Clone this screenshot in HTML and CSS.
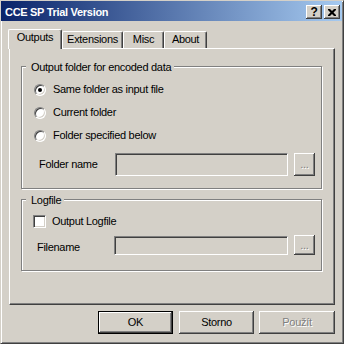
FILE: index.html
```html
<!DOCTYPE html>
<html lang="cs">
<head>
  <meta charset="UTF-8">
  <title>CCE SP Trial Version</title>
  <link rel="stylesheet" href="styles.css">
</head>
<body>
  <div class="window">
    <div class="titlebar">
      <span class="title">CCE SP Trial Version</span>
      <div class="caption-buttons">
        <span class="cap-btn">?</span>
        <span class="cap-btn">
          <svg width="8" height="7" viewBox="0 0 8 7">
            <path d="M0 0h2l2 2 2-2h2v1l-2.5 2.5 2.5 2.5v1h-2l-2-2-2 2h-2v-1l2.5-2.5-2.5-2.5z" fill="#000"/>
          </svg>
        </span>
      </div>
    </div>

    <div class="content">
      <div class="tabs">
        <div class="tab selected tab-outputs">Outputs</div>
        <div class="tab tab-extensions">Extensions</div>
        <div class="tab tab-misc">Misc</div>
        <div class="tab tab-about">About</div>
      </div>

      <div class="panel">
        <div class="group group-output">
          <span class="legend">Output folder for encoded data</span>
          <div class="option"><span class="radio checked"></span>Same folder as input file</div>
          <div class="option"><span class="radio"></span>Current folder</div>
          <div class="option"><span class="radio"></span>Folder specified below</div>
          <div class="field-row folder-row">
            <span class="field-label">Folder name</span>
            <span class="textbox"></span>
            <span class="browse">...</span>
          </div>
        </div>

        <div class="group group-log">
          <span class="legend">Logfile</span>
          <div class="check-row"><span class="checkbox"></span>Output Logfile</div>
          <div class="field-row file-row">
            <span class="field-label">Filename</span>
            <span class="textbox"></span>
            <span class="browse">...</span>
          </div>
        </div>
      </div>

      <div class="buttons">
        <div class="btn default">OK</div>
        <div class="btn btn-storno">Storno</div>
        <div class="btn btn-apply disabled">Použít</div>
      </div>
    </div>
  </div>
</body>
</html>
```

FILE: styles.css
```css
html, body {
  margin: 0;
  background: #d4d0c8;
}

body {
  font-family: "Liberation Sans", Arial, sans-serif;
  font-size: 11px;
  line-height: 13px;
  letter-spacing: -0.3px;
  color: #000;
}

*, *:before, *:after {
  box-sizing: border-box;
}

.window {
  width: 344px;
  height: 344px;
  border: 1px solid;
  border-color: #d4d0c8 #404040 #404040 #d4d0c8;
  box-shadow: inset 1px 1px #fff, inset -1px -1px #808080;
}

/* title bar */
.titlebar {
  height: 20px;
  margin-right: 1px;
  display: flex;
  justify-content: space-between;
  background: linear-gradient(to right, #0a246a, #a6caf0);
  color: #fff;
}

.title {
  font-weight: bold;
  padding: 5px 0 0 4px;
}

.caption-buttons {
  display: flex;
  gap: 2px;
  padding: 4px 2px 0 0;
}

.cap-btn {
  width: 16px;
  height: 14px;
  display: flex;
  align-items: center;
  justify-content: center;
  background: #d4d0c8;
  color: #000;
  font-weight: bold;
  font-size: 12px;
  box-shadow: inset -1px -1px #404040, inset 1px 1px #fff, inset -2px -2px #808080;
}

/* tabs */
.content {
  padding: 8px 8px 0 8px;
}

.tabs {
  display: flex;
  align-items: flex-end;
  height: 19px;
  margin-left: -1px;
}

.tab {
  height: 17px;
  padding-top: 1px;
  text-align: center;
  border-top: 1px solid #fff;
  border-left: 1px solid #fff;
  border-right: 1px solid #404040;
  border-radius: 2px 2px 0 0;
  box-shadow: inset -1px 0 #808080;
}

.tab.selected {
  height: 20px;
  margin-bottom: -1px;
  position: relative;
  z-index: 1;
  background: #d4d0c8;
}

.tab-outputs { width: 54px; }
.tab-extensions { width: 61px; }
.tab-misc { width: 41px; }
.tab-about { width: 43px; }

.panel {
  height: 257px;
  padding: 17px 0 0 11px;
  border-top: 1px solid #fff;
  border-left: 1px solid #fff;
  border-right: 1px solid #404040;
  border-bottom: 1px solid #404040;
  box-shadow: inset -1px -1px #808080;
}

/* group boxes */
.group {
  position: relative;
  width: 301px;
  border: 1px solid #808080;
  box-shadow: inset 1px 1px #fff, 1px 1px #fff;
}

.group-output {
  height: 123px;
  padding: 11px 0 0 12px;
}

.group-log {
  height: 72px;
  margin-top: 10px;
  padding: 15px 0 0 11px;
}

.legend {
  position: absolute;
  top: -6px;
  left: 4px;
  padding: 0 3px 0 5px;
  background: #d4d0c8;
}

.option {
  display: flex;
  align-items: center;
  height: 23px;
}

.radio {
  width: 12px;
  height: 12px;
  margin-right: 7px;
  display: flex;
  align-items: center;
  justify-content: center;
  border-radius: 50%;
  background: #fff;
  border: 1px solid;
  border-color: #808080 #fff #fff #808080;
  box-shadow: inset 1px 1px #404040, inset -1px -1px #d4d0c8;
}

.radio.checked:after {
  content: "";
  width: 4px;
  height: 4px;
  border-radius: 50%;
  background: #000;
}

.check-row {
  display: flex;
  align-items: center;
  height: 13px;
}

.checkbox {
  width: 13px;
  height: 13px;
  margin-right: 6px;
  background: #fff;
  border: 1px solid;
  border-color: #808080 #fff #fff #808080;
  box-shadow: inset 1px 1px #404040, inset -1px -1px #d4d0c8;
}

.field-row {
  display: flex;
}

.folder-row {
  height: 23px;
  margin-top: 6px;
}

.folder-row .field-label {
  width: 76px;
  margin-left: 5px;
  padding-top: 5px;
}

.folder-row .textbox {
  width: 173px;
}

.file-row {
  height: 20px;
  margin-top: 7px;
}

.file-row .field-label {
  width: 77px;
  margin-left: 4px;
  padding-top: 6px;
}

.file-row .textbox {
  width: 174px;
  height: 19px;
  margin-top: 1px;
}

.textbox {
  background: #d4d0c8;
  border: 1px solid;
  border-color: #808080 #fff #fff #808080;
  box-shadow: inset 1px 1px #404040, inset -1px -1px #d4d0c8;
}

.browse {
  width: 21px;
  margin-left: 6px;
  display: flex;
  align-items: center;
  justify-content: center;
  color: #808080;
  text-shadow: 1px 1px #fff;
  box-shadow: inset -1px -1px #404040, inset 1px 1px #fff, inset -2px -2px #808080;
}

/* dialog buttons */
.buttons {
  display: flex;
  justify-content: flex-end;
  margin-top: 6px;
}

.btn {
  width: 75px;
  height: 23px;
  display: flex;
  align-items: center;
  justify-content: center;
  box-shadow: inset -1px -1px #404040, inset 1px 1px #fff, inset -2px -2px #808080;
}

.btn.default {
  border: 1px solid #000;
}

.btn-storno {
  margin-left: 6px;
}

.btn-apply {
  width: 76px;
  margin-left: 5px;
}

.btn.disabled {
  color: #808080;
  text-shadow: 1px 1px #fff;
}
```
